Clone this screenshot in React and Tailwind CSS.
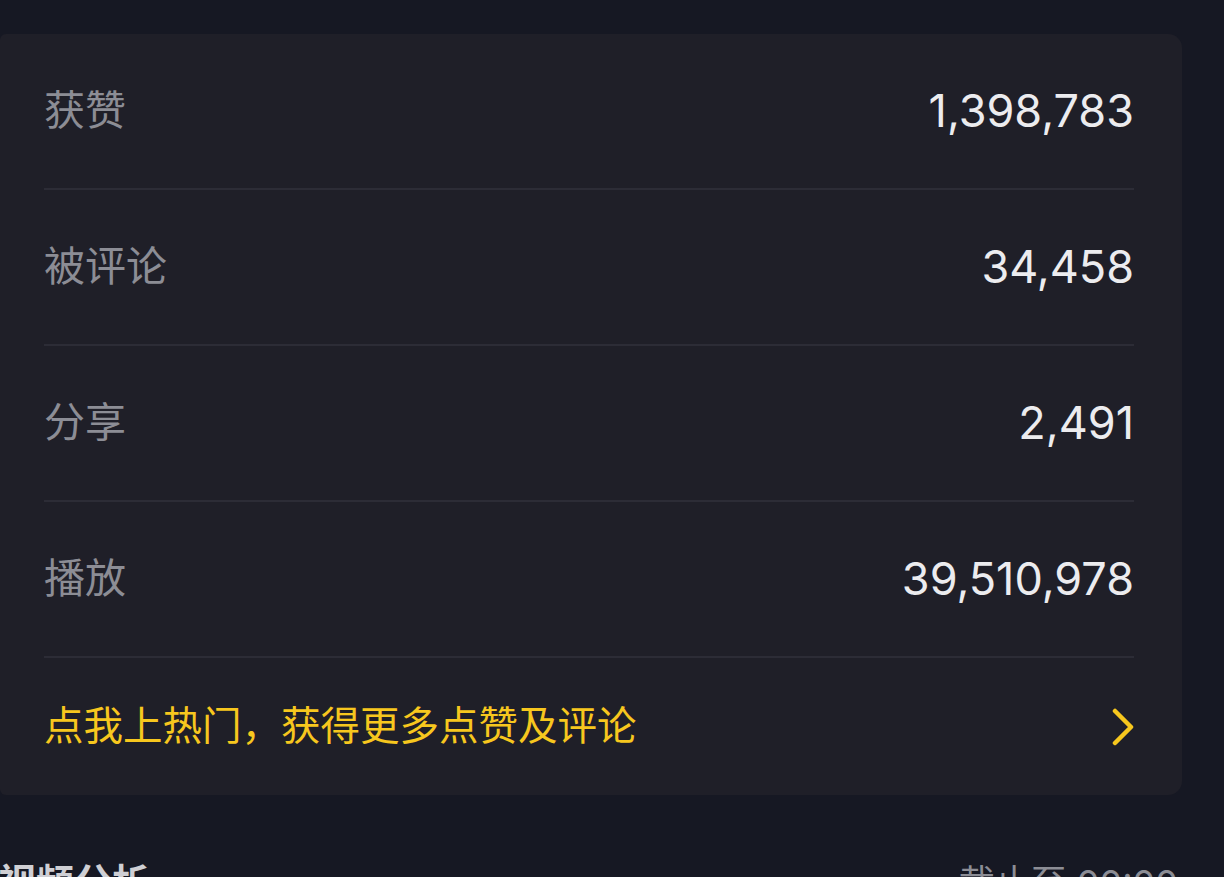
import React from "react";

const stats = [
  { label: "获赞", value: "1,398,783" },
  { label: "被评论", value: "34,458" },
  { label: "分享", value: "2,491" },
  { label: "播放", value: "39,510,978" },
];

const StatRow = ({ label, value }) => {
  return (
    <div className="flex items-center justify-between h-[156px] border-b-2 border-[#2c2c36]">
      <span className="text-[41px] text-[#8c8d95]">{label}</span>
      <span className="text-[45px] text-[#ececef]">{value}</span>
    </div>
  );
};

export default function App() {
  return (
    <div
      className="h-[877px] overflow-hidden bg-[#161823]"
      style={{ fontFamily: 'Inter, "Noto Sans CJK SC", sans-serif' }}
    >
      <div className="pt-[34px] pr-[42px]">
        {/* stats card */}
        <div className="bg-[#1f1f28] rounded-r-[14px] rounded-l-[6px] px-[44px] pr-[48px]">
          {stats.map((s) => (
            <StatRow key={s.label} label={s.label} value={s.value} />
          ))}
          <div className="flex items-center justify-between h-[137px]">
            <span className="text-[39.5px] text-[#f7c71e]">
              点我上热门，获得更多点赞及评论
            </span>
            <svg width="22" height="40" viewBox="0 0 22 40" fill="none">
              <path
                d="M3 4 L19 20 L3 36"
                stroke="#f7c71e"
                strokeWidth="4.5"
                strokeLinecap="round"
                strokeLinejoin="round"
              />
            </svg>
          </div>
        </div>

        {/* section header */}
        <div className="flex items-center justify-between mt-[59px] pr-[4px]">
          <span className="text-[38px] font-bold text-[#cfcfd4] -ml-[2px]">视频分析</span>
          <span className="text-[36px] text-[#8c8d95]">截止至 00:00</span>
        </div>
      </div>
    </div>
  );
}
